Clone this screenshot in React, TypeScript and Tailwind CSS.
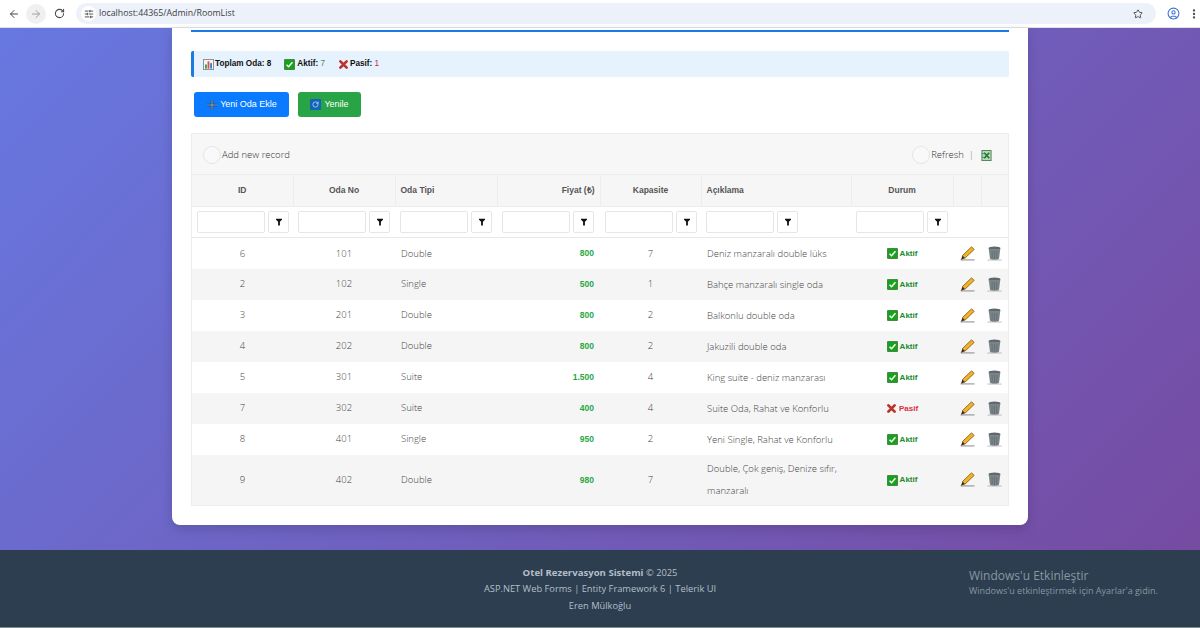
import { ArrowLeft, ArrowRight, CircleUser, EllipsisVertical, RotateCw, SlidersHorizontal, Star } from 'lucide-react';

interface Room {
  id: number;
  no: number;
  type: string;
  price: string;
  capacity: number;
  description: string;
  active: boolean;
}

const rooms: Room[] = [
  { id: 6, no: 101, type: 'Double', price: '800', capacity: 7, description: 'Deniz manzaralı double lüks', active: true },
  { id: 2, no: 102, type: 'Single', price: '500', capacity: 1, description: 'Bahçe manzaralı single oda', active: true },
  { id: 3, no: 201, type: 'Double', price: '800', capacity: 2, description: 'Balkonlu double oda', active: true },
  { id: 4, no: 202, type: 'Double', price: '800', capacity: 2, description: 'Jakuzili double oda', active: true },
  { id: 5, no: 301, type: 'Suite', price: '1.500', capacity: 4, description: 'King suite - deniz manzarası', active: true },
  { id: 7, no: 302, type: 'Suite', price: '400', capacity: 4, description: 'Suite Oda, Rahat ve Konforlu', active: false },
  { id: 8, no: 401, type: 'Single', price: '950', capacity: 2, description: 'Yeni Single, Rahat ve Konforlu', active: true },
  { id: 9, no: 402, type: 'Double', price: '980', capacity: 7, description: 'Double, Çok geniş, Denize sıfır, manzaralı', active: true },
];

const filterCols = [0, 1, 2, 3, 4, 5, 6];

function CheckIcon() {
  return (
    <svg viewBox="0 0 12 12" className="h-[11px] w-[11px] shrink-0">
      <rect x="0.5" y="0.5" width="11" height="11" rx="0.4" fill="#16a31a" stroke="#3f7d3f" />
      <path d="M2.8 6.2 5 8.4 9.2 3.6" fill="none" stroke="#fff" strokeWidth="1.6" />
    </svg>
  );
}

function CrossIcon() {
  return (
    <svg viewBox="0 0 12 12" className="h-[11px] w-[11px] shrink-0">
      <path d="M2.6 2.6 9.4 9.4M9.4 2.6 2.6 9.4" stroke="#b8352c" strokeWidth="3" strokeLinecap="round" />
    </svg>
  );
}

function ChartIcon() {
  return (
    <svg viewBox="0 0 12 12" className="h-[11px] w-[11px] shrink-0">
      <rect x="0.5" y="0.5" width="11" height="11" fill="#f4f4f4" stroke="#8a8a8a" />
      <rect x="2.2" y="6" width="2" height="4.5" fill="#3f9a45" />
      <rect x="5" y="2.5" width="2" height="8" fill="#d8544c" />
      <rect x="7.8" y="4.5" width="2" height="6" fill="#3d7fc4" />
    </svg>
  );
}

function FilterIcon() {
  return (
    <svg viewBox="0 0 8 9" className="h-[8px] w-[6px] fill-[#111]">
      <path d="M0 0H8V1.6L5.2 4V9H2.8V4L0 1.6Z" />
    </svg>
  );
}

function PencilIcon() {
  return (
    <svg viewBox="0 0 14 14" className="h-[15px] w-[15px]">
      <path d="M0.6 13H13.6" stroke="#777" strokeWidth="0.8" />
      <path d="M10.8 0.8 13.2 3.2 4.6 11.4 2.2 9Z" fill="#f0b429" stroke="#8b5a12" strokeWidth="0.8" />
      <path d="M2.2 9 0.9 12.8 4.6 11.4Z" fill="#3a2a18" />
    </svg>
  );
}

function TrashIcon() {
  return (
    <svg viewBox="0 0 14 14" className="h-[15px] w-[15px]">
      <ellipse cx="7" cy="2.2" rx="5.6" ry="1.7" fill="#5f686c" />
      <path d="M1.6 2.8 2.8 12C3.4 13.2 10.6 13.2 11.2 12L12.4 2.8Z" fill="#7a8589" />
      <path d="M4.8 4.6V11.8M7 4.6V12M9.2 4.6V11.8" stroke="#656d70" strokeWidth="0.8" />
      <path d="M0.4 13.1H13.6" stroke="#9a9a9a" strokeWidth="0.6" />
    </svg>
  );
}

function ExcelIcon() {
  return (
    <svg viewBox="0 0 12 12" className="h-[11px] w-[11px]">
      <rect x="1" y="0.5" width="10" height="11" fill="#b9d8b4" stroke="#4b7f55" />
      <path d="M3.5 3 9 9M9 3 3.5 9" stroke="#1d7a32" strokeWidth="1.8" />
      <path d="M1 4H3M1 8H3" stroke="#3f6f9e" strokeWidth="1" />
    </svg>
  );
}

function FilterCell() {
  return (
    <div className="flex gap-[3px]">
      <div className="h-[22px] w-[68px] rounded-[2px] border border-[#e6e6e6] bg-white" />
      <div className="flex h-[22px] w-[21px] items-center justify-center rounded-[2px] border border-[#e6e6e6] bg-white">
        <FilterIcon />
      </div>
    </div>
  );
}

function BrowserBar() {
  return (
    <div className="flex h-[28px] items-center border-b border-[#dfe1e5] bg-white pl-[8px] text-[#474747]">
      <ArrowLeft size={12} strokeWidth={2} />
      <div className="ml-[6px] flex h-[20px] w-[20px] items-center justify-center rounded-full bg-[#f0f0f0]">
        <ArrowRight size={12} strokeWidth={2} className="text-[#a0a0a0]" />
      </div>
      <RotateCw size={11} strokeWidth={2.2} className="ml-[8px]" />
      <div className="ml-[11px] flex h-[21px] w-[1080px] items-center rounded-full bg-[#edf2fa] pl-[5px] pr-[13px]">
        <div className="flex h-[15px] w-[15px] items-center justify-center rounded-full bg-white">
          <SlidersHorizontal size={10} strokeWidth={2.2} />
        </div>
        <span className="ml-[3px] font-['Open_Sans',sans-serif] text-[8.8px] text-[#3c4043]">localhost:44365/Admin/RoomList</span>
        <Star size={10} strokeWidth={2.2} className="ml-auto" />
      </div>
      <CircleUser size={13} strokeWidth={2} className="ml-[11px] text-[#3f73d9]" />
      <EllipsisVertical size={12} strokeWidth={2.6} className="ml-auto" />
    </div>
  );
}

function StatsBar() {
  return (
    <div className="mt-[19px] flex h-[26px] items-center rounded-[2px] border-l-[3px] border-[#1a7be0] bg-[#e6f2fd] pl-[9px] font-['Liberation_Sans',sans-serif] text-[8.2px] font-bold text-[#111]">
      <ChartIcon />
      <span className="ml-[1px]">Toplam Oda: 8</span>
      <span className="ml-[13px]"><CheckIcon /></span>
      <span className="ml-[2px]">Aktif: <span className="font-normal text-[#4f8a5b]">7</span></span>
      <span className="ml-[13px]"><CrossIcon /></span>
      <span className="ml-[1px]">Pasif: <span className="font-normal text-[#c0304a]">1</span></span>
    </div>
  );
}

function Actions() {
  return (
    <div className="ml-[3px] mt-[15px] flex gap-[9px] font-['Liberation_Sans',sans-serif] text-[9px] text-white">
      <button className="flex h-[25px] w-[95px] items-center justify-center gap-[2px] rounded-[3px] bg-[#0a7bff]">
        <svg viewBox="0 0 12 12" className="h-[12px] w-[12px]">
          <path d="M6 1V11M1 6H11" stroke="#23405f" strokeWidth="2.4" />
          <path d="M6 1V11M1 6H11" stroke="#9cc3e8" strokeWidth="0.8" />
        </svg>
        Yeni Oda Ekle
      </button>
      <button className="flex h-[25px] w-[63px] items-center justify-center gap-[3px] rounded-[3px] bg-[#28a345]">
        <span className="flex h-[11px] w-[11px] items-center justify-center rounded-[1px] bg-[#1364b8]">
          <RotateCw size={7} strokeWidth={2.4} className="text-[#cfe6fb]" />
        </span>
        Yenile
      </button>
    </div>
  );
}

function RoomGrid() {
  return (
    <div className="mt-[16px] border border-[#ededed] font-['Open_Sans',sans-serif] text-[9.5px] font-light text-[#444]">
      <div className="flex h-[40px] items-center bg-[#f7f7f7] pl-[11px] pr-[16px] pt-[2px] text-[#333]">
        <span className="h-[18px] w-[18px] rounded-full border border-[#e6e6e6] bg-[#f9f9f9]" />
        <span className="ml-[1px]">Add new record</span>
        <span className="ml-auto h-[18px] w-[18px] rounded-full border border-[#e6e6e6] bg-[#f9f9f9]" />
        <span className="ml-[1px]">Refresh</span>
        <span className="ml-[5px] mr-[7px] text-[#777]">|</span>
        <ExcelIcon />
      </div>
      <table className="w-full table-fixed border-collapse">
        <colgroup>
          <col className="w-[101px]" />
          <col className="w-[102px]" />
          <col className="w-[102px]" />
          <col className="w-[103px]" />
          <col className="w-[101px]" />
          <col className="w-[150px]" />
          <col className="w-[102px]" />
          <col className="w-[28px]" />
          <col className="w-[27px]" />
        </colgroup>
        <thead>
          <tr className="h-[32px] border-y border-[#ededed] bg-[#f6f6f6] font-['Liberation_Sans',sans-serif] text-[8.5px] font-bold text-[#555]">
            <th className="border-r border-[#ededed] text-center">ID</th>
            <th className="border-r border-[#ededed] text-center">Oda No</th>
            <th className="border-r border-[#ededed] pl-[5px] text-left">Oda Tipi</th>
            <th className="border-r border-[#ededed] pr-[5px] text-right">Fiyat (₺)</th>
            <th className="border-r border-[#ededed] text-center">Kapasite</th>
            <th className="border-r border-[#ededed] pl-[5px] text-left">Açıklama</th>
            <th className="border-r border-[#ededed] text-center">Durum</th>
            <th className="border-r border-[#ededed]" />
            <th />
          </tr>
          <tr className="h-[31px] border-b border-[#e8e8e8] bg-white">
            {filterCols.map((col) => (
              <th key={col} className="pl-[5px] font-normal">
                <FilterCell />
              </th>
            ))}
            <th />
            <th />
          </tr>
        </thead>
        <tbody>
          {rooms.map((room, index) => (
            <tr key={room.id} className={`${index === 7 ? 'h-[50px]' : 'h-[31px]'} ${index % 2 === 1 || index === 7 ? 'bg-[#f5f5f5]' : 'bg-white'}`}>
              <td className="pt-px text-center">{room.id}</td>
              <td className="pt-px text-center">{room.no}</td>
              <td className="pl-[6px] pt-px">{room.type}</td>
              <td className="pr-[6px] pt-px text-right font-['Liberation_Sans',sans-serif] text-[8.5px] font-bold text-[#28a745]">{room.price}</td>
              <td className="pt-px text-center">{room.capacity}</td>
              <td className="pl-[6px] pr-[8px] pt-px leading-[22px]">{room.description}</td>
              <td className="pt-px">
                <div className={`flex items-center justify-center gap-[2px] font-['Liberation_Sans',sans-serif] text-[8px] font-bold ${room.active ? 'text-[#1c8a2e]' : 'text-[#dc2f3c]'}`}>
                  {room.active ? <CheckIcon /> : <CrossIcon />}
                  {room.active ? 'Aktif' : 'Pasif'}
                </div>
              </td>
              <td><div className="flex justify-center"><PencilIcon /></div></td>
              <td><div className="flex justify-center"><TrashIcon /></div></td>
            </tr>
          ))}
        </tbody>
      </table>
    </div>
  );
}

export default function App() {
  return (
    <div className="flex h-[628px] w-[1200px] flex-col overflow-hidden bg-white">
      <BrowserBar />
      <main className="h-[522px] bg-[linear-gradient(135deg,#6778e0,#764ba2)]">
        <div className="ml-[172px] h-[497px] w-[856px] rounded-b-[8px] bg-white px-[19px] pt-[2px] shadow-[0_4px_12px_rgba(0,0,0,0.15)]">
          <div className="h-[2px] bg-[#1a7be0]" />
          <StatsBar />
          <Actions />
          <RoomGrid />
        </div>
      </main>
      <footer className="relative flex h-[77px] flex-col items-center justify-center bg-[#2c3e50] pt-[2px] font-['Open_Sans',sans-serif] text-[9.3px] leading-[16.5px] text-[#b4bec8]">
        <p><strong className="text-[9.6px] font-bold">Otel Rezervasyon Sistemi</strong> © 2025</p>
        <p>ASP.NET Web Forms | Entity Framework 6 | Telerik UI</p>
        <p>Eren Mülkoğlu</p>
        <div className="absolute left-[969px] top-[18px] text-[#8a96a2]">
          <p className="text-[12px] leading-[16px]">Windows'u Etkinleştir</p>
          <p className="text-[9px] leading-[14px]">Windows'u etkinleştirmek için Ayarlar'a gidin.</p>
        </div>
      </footer>
      <div className="h-px bg-[#7d8f80]" />
    </div>
  );
}
